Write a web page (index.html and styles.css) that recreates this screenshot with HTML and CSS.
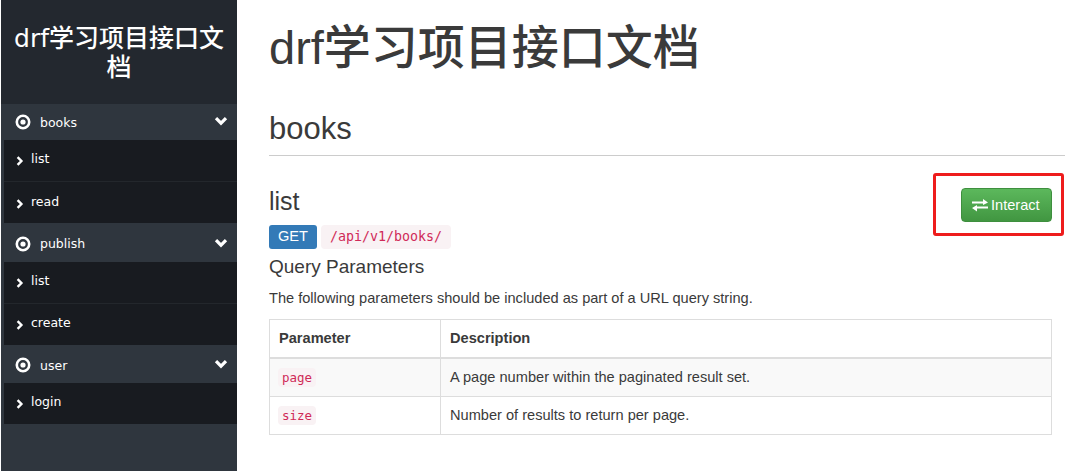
FILE: index.html
```html
<!DOCTYPE html>
<html lang="zh-CN">
<head>
    <meta charset="UTF-8">
    <title>drf学习项目接口文档</title>
    <link rel="stylesheet" href="styles.css">
</head>
<body>
<svg class="icon-defs" width="0" height="0">
    <symbol id="dot-circle" viewBox="0 0 16 16">
        <circle cx="8" cy="8" r="6.2" fill="none" stroke="currentColor" stroke-width="2.6"/>
        <circle cx="8" cy="8" r="2.6" fill="currentColor"/>
    </symbol>
    <symbol id="chevron-down" viewBox="0 0 14 10">
        <path d="M2 2.2 7 7.2 12 2.2" fill="none" stroke="currentColor" stroke-width="3.2"/>
    </symbol>
    <symbol id="chevron-right" viewBox="0 0 8 10">
        <path d="M1.6 1.2 5.4 5 1.6 8.8" fill="none" stroke="currentColor" stroke-width="2.4"/>
    </symbol>
    <symbol id="exchange" viewBox="0 0 16 14">
        <path d="M0 3.4H11V1L16 4.6 11 7V5.4H0ZM16 8.6H5V7L0 10 5 13.4V10.6H16Z" fill="currentColor"/>
    </symbol>
</svg>
<div class="layout">
    <div class="sidebar">
        <h3 class="brand">drf<span class="cjk">学习项目接口文档</span></h3>
        <div class="menu">
            <div class="group">
                <div class="group-title">
                    <svg class="dot"><use href="#dot-circle"/></svg>
                    <span>books</span>
                    <svg class="arrow"><use href="#chevron-down"/></svg>
                </div>
                <div class="item"><svg class="caret"><use href="#chevron-right"/></svg><span>list</span></div>
                <div class="item"><svg class="caret"><use href="#chevron-right"/></svg><span>read</span></div>
            </div>
            <div class="group">
                <div class="group-title">
                    <svg class="dot"><use href="#dot-circle"/></svg>
                    <span>publish</span>
                    <svg class="arrow"><use href="#chevron-down"/></svg>
                </div>
                <div class="item"><svg class="caret"><use href="#chevron-right"/></svg><span>list</span></div>
                <div class="item"><svg class="caret"><use href="#chevron-right"/></svg><span>create</span></div>
            </div>
            <div class="group">
                <div class="group-title">
                    <svg class="dot"><use href="#dot-circle"/></svg>
                    <span>user</span>
                    <svg class="arrow"><use href="#chevron-down"/></svg>
                </div>
                <div class="item"><svg class="caret"><use href="#chevron-right"/></svg><span>login</span></div>
            </div>
        </div>
    </div>
    <div class="main">
        <h1 class="page-title">drf<span class="cjk">学习项目接口文档</span></h1>
        <h2 class="section-title">books</h2>
        <div class="endpoint">
            <div class="endpoint-info">
                <h3 class="endpoint-name">list</h3>
                <div class="endpoint-url">
                    <span class="method">GET</span>
                    <code class="path">/api/v1/books/</code>
                </div>
            </div>
            <button class="interact"><svg class="swap"><use href="#exchange"/></svg>Interact</button>
        </div>
        <h4 class="params-title">Query Parameters</h4>
        <p class="params-note">The following parameters should be included as part of a URL query string.</p>
        <table class="params">
            <thead>
                <tr><th class="col-name">Parameter</th><th>Description</th></tr>
            </thead>
            <tbody>
                <tr class="odd"><td><code>page</code></td><td>A page number within the paginated result set.</td></tr>
                <tr><td><code>size</code></td><td>Number of results to return per page.</td></tr>
            </tbody>
        </table>
    </div>
</div>
<div class="highlight"></div>
</body>
</html>
```

FILE: styles.css
```css
* {
    box-sizing: border-box;
}
html, body {
    height: 100%;
    margin: 0;
    overflow: hidden;
}
body {
    font-family: "Liberation Sans", "Noto Sans CJK SC", Arial, sans-serif;
    font-size: 14.6px;
    line-height: 20px;
    color: #3a3a3a;
    background: #fff;
}
.icon-defs {
    display: block;
}
.cjk {
    font-family: "Noto Sans CJK SC Medium", "Noto Sans CJK SC", sans-serif;
    font-weight: 500;
}
.layout {
    display: flex;
    height: 471px;
    padding-left: 1px;
}
.sidebar {
    width: 236px;
    flex: none;
    background: #2f363e;
    color: #fff;
    font-family: "DejaVu Sans", "Noto Sans CJK SC", sans-serif;
    font-size: 12.5px;
}
.brand {
    height: 104px;
    margin: 0;
    padding: 23px 4px 0;
    background: #23282f;
    font-size: 25px;
    font-weight: 400;
    line-height: 26px;
    text-align: center;
}
.group {
    margin-bottom: 2.2px;
}
.group-title {
    display: flex;
    align-items: center;
    height: 36px;
    padding: 0 9px 0 14px;
    background: #2f363e;
}
.dot {
    width: 16px;
    height: 16px;
    margin-right: 10px;
}
.group-title span {
    flex: 1;
    margin-top: 1px;
    margin-left: -1px;
}
.arrow {
    width: 14px;
    height: 10px;
    margin-top: -2px;
}
.item {
    display: flex;
    align-items: flex-start;
    height: 42.4px;
    margin-left: 3px;
    padding: 9.3px 0 0 12px;
    background: #181b20;
    border-bottom: 1px solid #23272c;
}
.item:last-child {
    height: 41px;
    border-bottom: 0;
}
.caret {
    width: 8px;
    height: 10px;
    margin: 7px 7px 0 0;
}
.main {
    flex: 1;
    padding: 0 0 0 32px;
    min-width: 0;
}
.page-title {
    height: 60px;
    margin: 14px 0 0;
    font-size: 47px;
    font-weight: 500;
    line-height: 60px;
}
.section-title {
    margin: 38px 0 0;
    padding-bottom: 10px;
    font-size: 31px;
    font-weight: 500;
    line-height: 33px;
    border-bottom: 1px solid #ccc;
}
.endpoint {
    display: flex;
    justify-content: space-between;
    align-items: flex-start;
    padding-right: 13px;
}
.endpoint-name {
    margin: 32px 0 10px;
    font-size: 25px;
    font-weight: 500;
    line-height: 27px;
}
.endpoint-url {
    display: flex;
    align-items: center;
    gap: 4px;
    height: 24px;
}
.method {
    display: block;
    height: 24px;
    padding: 1px 9px 0;
    line-height: 20px;
    color: #fff;
    background: #337ab7;
    border-radius: 3px;
}
code {
    font-family: "DejaVu Sans Mono", "Liberation Mono", monospace;
    color: #d02a58;
    background: #f9f2f4;
    border-radius: 4px;
}
.path {
    padding: 2px 9px;
    font-size: 13.3px;
    line-height: 20px;
}
.interact {
    display: flex;
    align-items: center;
    width: 91px;
    height: 34px;
    margin-top: 32px;
    padding: 0 0 0 10px;
    font-family: "Liberation Sans", sans-serif;
    font-size: 14.6px;
    color: #fff;
    background: linear-gradient(#5cb85c, #419641);
    border: 1px solid #3e8f3e;
    border-radius: 4px;
}
.swap {
    width: 16px;
    height: 14px;
    margin-right: 3px;
}
.params-title {
    margin: 8px 0 11px;
    font-size: 19px;
    font-weight: 500;
    line-height: 20px;
}
.params-note {
    margin: 0 0 11px;
}
.params {
    width: 783px;
    border-collapse: collapse;
    border: 1px solid #ddd;
}
.params th, .params td {
    padding: 8px 9px;
    text-align: left;
    border: 1px solid #ddd;
}
.params th {
    height: 38px;
    border-bottom-width: 2px;
}
.params td {
    height: 38px;
}
.col-name {
    width: 171px;
}
.odd {
    background: #f9f9f9;
}
.params code {
    margin-left: -1px;
    padding: 2px 4px;
    font-size: 12.5px;
}
.highlight {
    position: absolute;
    left: 933px;
    top: 173px;
    width: 131px;
    height: 63px;
    border: 3px solid #ee1c1c;
    border-radius: 3px;
}
```
